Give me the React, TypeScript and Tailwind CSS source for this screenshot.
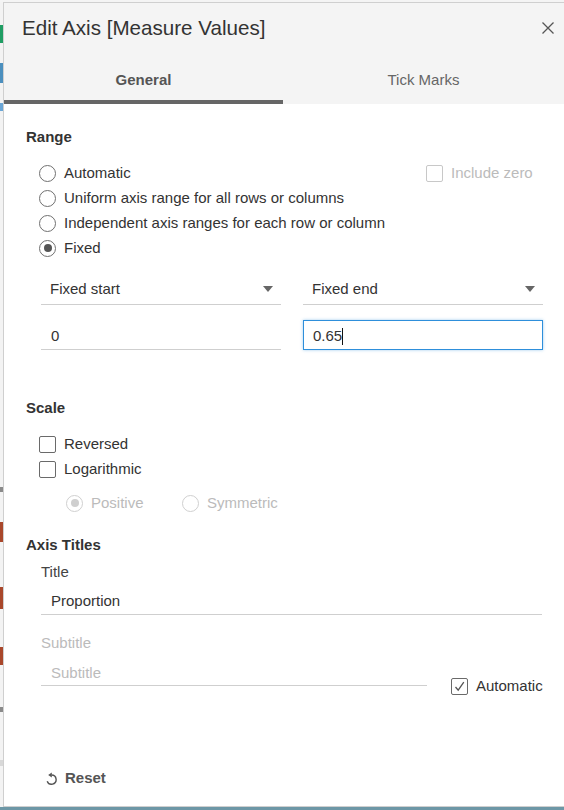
import React from "react";

function Radio({ checked, disabled }: { checked?: boolean; disabled?: boolean }) {
  return (
    <span
      className={
        disabled
          ? "w-[17px] h-[17px] shrink-0 rounded-full border border-[#d0d0d0] bg-white flex items-center justify-center"
          : "w-[17px] h-[17px] shrink-0 rounded-full border border-[#707070] bg-white flex items-center justify-center"
      }
    >
      {checked && (
        <span
          className={
            disabled
              ? "w-[8px] h-[8px] rounded-full bg-[#cfcfcf]"
              : "w-[8px] h-[8px] rounded-full bg-[#555555]"
          }
        />
      )}
    </span>
  );
}

function Checkbox({ checked, disabled }: { checked?: boolean; disabled?: boolean }) {
  return (
    <span
      className={
        disabled
          ? "w-[17px] h-[17px] shrink-0 rounded-[2px] border border-[#c8c8c8] bg-white flex items-center justify-center"
          : "w-[17px] h-[17px] shrink-0 rounded-[2px] border border-[#6a6a6a] bg-white flex items-center justify-center"
      }
    >
      {checked && (
        <svg width="13" height="13" viewBox="0 0 13 13">
          <path d="M2.5 7 L5.2 10.2 L10.8 2.2" fill="none" stroke="#555" strokeWidth="1.3" />
        </svg>
      )}
    </span>
  );
}

function Caret() {
  return (
    <svg width="10" height="6" viewBox="0 0 10 6">
      <path d="M0 0 L10 0 L5 6 Z" fill="#666" />
    </svg>
  );
}

export default function App() {
  return (
    <div className="w-[564px] h-[810px] flex flex-col overflow-hidden bg-white font-['Liberation_Sans',Arial,sans-serif] text-[#333]">
      <div className="h-[2px] shrink-0 bg-[#f4f4f4]" />
      <div className="flex flex-1 min-h-0">
        <div className="w-[3px] shrink-0 flex flex-col bg-[#f3f3f3]">
          <div className="h-[23px]" />
          <div className="h-[18px] bg-[#1f9d63]" />
          <div className="h-[20px]" />
          <div className="h-[20px] bg-[#4b8fbe]" />
          <div className="h-[20px]" />
          <div className="h-[8px] bg-[#6aa6d6]" />
          <div className="h-[376px]" />
          <div className="h-[5px] bg-[#8a8a8a]" />
          <div className="h-[30px]" />
          <div className="h-[20px] bg-[#a9472b]" />
          <div className="h-[45px]" />
          <div className="h-[22px] bg-[#a9472b]" />
          <div className="h-[38px]" />
          <div className="h-[18px] bg-[#a9472b]" />
          <div className="h-[42px]" />
          <div className="h-[5px] bg-[#8a8a8a]" />
          <div className="h-[48px]" />
          <div className="h-[6px] bg-[#d8d8d8]" />
        </div>
        <div className="flex-1 flex flex-col border-l border-t border-b border-[#cfcfcf] bg-white">
          <div className="bg-[#f4f4f4] shrink-0">
            <div className="h-[50px] flex items-center pl-[18px] pr-[10px]">
              <div className="flex-1 text-[20.6px] leading-[24px] text-[#333]">Edit Axis [Measure Values]</div>
              <svg width="12" height="12" viewBox="0 0 12 12">
                <path d="M0.5 0.5 L11.5 11.5 M11.5 0.5 L0.5 11.5" stroke="#555" strokeWidth="1.3" fill="none" />
              </svg>
            </div>
            <div className="h-[51px] flex">
              <div className="w-[279px] flex flex-col">
                <div className="h-[47px] pt-[18px] text-center text-[15px] leading-[18px] font-bold text-[#555]">General</div>
                <div className="h-[4px] bg-[#666]" />
              </div>
              <div className="flex-1 pt-[18px] text-center text-[15px] leading-[18px] text-[#666]">Tick Marks</div>
            </div>
          </div>

          <div className="flex-1 flex flex-col pl-[22px] pt-[24px] text-[15px]">
            <div className="leading-[18px] font-bold text-[#333]">Range</div>

            <div className="mt-[14px] flex flex-col">
              <div className="h-[25px] flex items-center pt-[1px]">
                <div className="flex-1 flex items-center gap-[8px] ml-[13px]">
                  <Radio />
                  <span>Automatic</span>
                </div>
                <div className="w-[138px] flex items-center gap-[8px]">
                  <Checkbox disabled />
                  <span className="text-[#bbb]">Include zero</span>
                </div>
              </div>
              <div className="h-[25px] flex items-center gap-[8px] ml-[13px] pt-[1px]">
                <Radio />
                <span>Uniform axis range for all rows or columns</span>
              </div>
              <div className="h-[25px] flex items-center gap-[8px] ml-[13px] pt-[1px]">
                <Radio />
                <span>Independent axis ranges for each row or column</span>
              </div>
              <div className="h-[25px] flex items-center gap-[8px] ml-[13px] pt-[1px]">
                <Radio checked />
                <span>Fixed</span>
              </div>
            </div>

            <div className="mt-[14px] ml-[15px] flex gap-[22px]">
              <div className="w-[240px] h-[31px] border-b border-[#cfcfcf] flex items-center justify-between pl-[9px] pr-[8px]">
                <span>Fixed start</span>
                <Caret />
              </div>
              <div className="w-[240px] h-[31px] border-b border-[#cfcfcf] flex items-center justify-between pl-[9px] pr-[8px]">
                <span>Fixed end</span>
                <Caret />
              </div>
            </div>

            <div className="mt-[15px] ml-[15px] flex gap-[22px]">
              <div className="w-[240px] h-[30px] border-b border-[#cfcfcf] flex items-center pl-[10px] pt-[3px]">
                <span>0</span>
              </div>
              <div className="w-[240px] h-[30px] border border-[#2e8fdb] shadow-[0_0_3px_rgba(46,143,219,0.45)] flex items-center pl-[9px] pt-[2px]">
                <span>0.65</span>
                <span className="w-[1px] h-[17px] bg-[#111]" />
              </div>
            </div>

            <div className="mt-[49px] leading-[18px] font-bold text-[#333]">Scale</div>

            <div className="mt-[14px] flex flex-col">
              <div className="h-[25px] flex items-center gap-[8px] ml-[13px] pt-[1px]">
                <Checkbox />
                <span>Reversed</span>
              </div>
              <div className="h-[25px] flex items-center gap-[8px] ml-[13px] pt-[1px]">
                <Checkbox />
                <span>Logarithmic</span>
              </div>
            </div>

            <div className="mt-[9px] h-[25px] ml-[40px] flex items-center pt-[1px]">
              <div className="w-[116px] flex items-center gap-[8px]">
                <Radio checked disabled />
                <span className="text-[#bbb]">Positive</span>
              </div>
              <div className="flex items-center gap-[8px]">
                <Radio disabled />
                <span className="text-[#bbb]">Symmetric</span>
              </div>
            </div>

            <div className="mt-[21px] leading-[18px] font-bold text-[#333]">Axis Titles</div>

            <div className="mt-[9px] ml-[15px] leading-[18px] text-[#444]">Title</div>
            <div className="mt-[4px] ml-[15px] w-[501px] h-[30px] border-b border-[#cfcfcf] flex items-center pl-[10px] pt-[4px]">
              <span>Proportion</span>
            </div>

            <div className="mt-[19px] ml-[15px] leading-[18px] text-[#bbb]">Subtitle</div>
            <div className="mt-[4px] ml-[15px] flex items-start">
              <div className="w-[386px] h-[30px] border-b border-[#cfcfcf] flex items-center pl-[10px] pt-[5px]">
                <span className="text-[#bbb]">Subtitle</span>
              </div>
              <div className="ml-[24px] mt-[19px] flex items-center gap-[8px]">
                <Checkbox checked />
                <span>Automatic</span>
              </div>
            </div>

            <div className="flex-1" />

            <div className="ml-[19px] mb-[19px] flex items-center gap-[8px]">
              <svg width="12" height="13" viewBox="0 0 12 13">
                <path d="M6.5 3 A4.6 4.6 0 1 1 2.2 9.2" fill="none" stroke="#555" strokeWidth="1.4" />
                <path d="M3.2 3 L6.8 0.6 L6.8 5.4 Z" fill="#555" />
              </svg>
              <span className="leading-[18px] font-bold text-[#555]">Reset</span>
            </div>
          </div>
        </div>
      </div>
      <div className="h-[3px] shrink-0 bg-[#6d97a6]" />
    </div>
  );
}
